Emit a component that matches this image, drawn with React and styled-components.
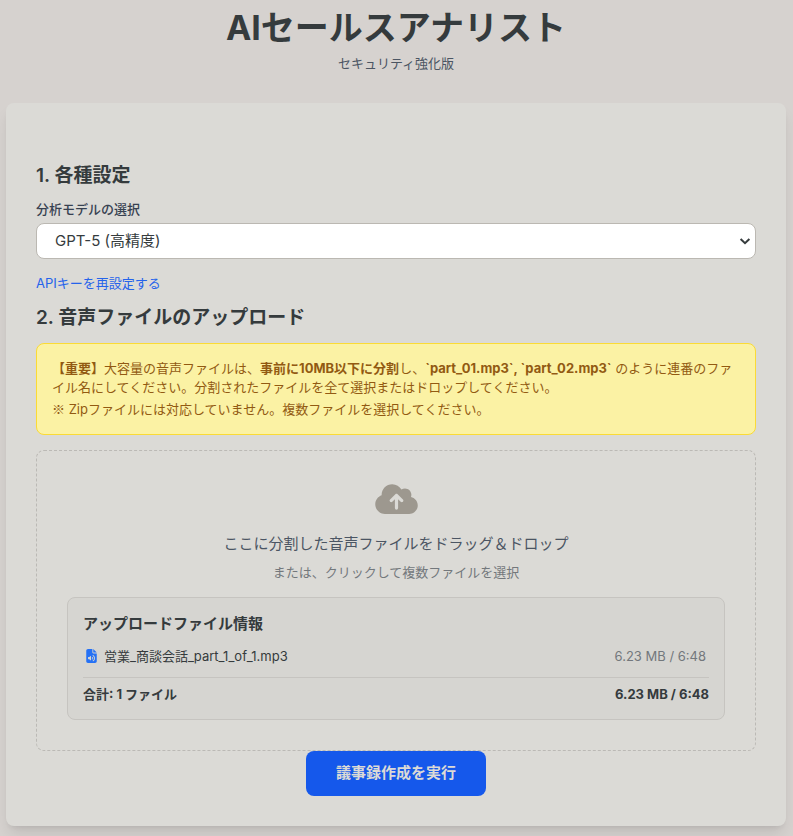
import React, {useState} from "react";
import styled, {createGlobalStyle} from "styled-components";
import {FaCloudArrowUp, FaFileAudio} from "react-icons/fa6";

const GlobalStyle = createGlobalStyle`
	* {
		box-sizing: border-box;
	}

	body {
		margin: 0;
		background: #d6d2cf;
		color: #353b3d;
		font-family: Inter, "Noto Sans CJK JP", sans-serif;
		font-size: 15px;
		line-height: 23px;
	}

	h1, h2, h3, p, ul {
		margin: 0;
		padding: 0;
	}
`

const Page = styled.div`
	max-width: 960px;
	margin: 0 auto;
	padding: 9px 7px 10px 6px;
`

const Header = styled.header`
	margin-bottom: 30px;
	text-align: center;
`

const Title = styled.h1`
	font-size: 34px;
	font-weight: 700;
	line-height: 38px;
`

const Subtitle = styled.p`
	margin-top: 6px;
	color: #4b5563;
	font-size: 13px;
	line-height: 20px;
`

const Card = styled.main`
	padding: 60px 30px 30px;
	border-radius: 8px;
	background: #dbdad6;
	box-shadow: 0 10px 15px -3px rgba(0, 0, 0, 0.1), 0 4px 6px -4px rgba(0, 0, 0, 0.1);
`

const SectionTitle = styled.h2`
	margin-bottom: ${props => props.$gap};
	font-size: 19px;
	font-weight: 600;
	line-height: 26px;
`

const FieldLabel = styled.label`
	display: block;
	margin-bottom: 4px;
	color: #374151;
	font-size: 13px;
	font-weight: 500;
	line-height: 20px;
`

const SelectWrapper = styled.div`
	position: relative;
`

const ModelSelect = styled.select`
	display: block;
	width: 100%;
	height: 36px;
	padding: 0 30px 2px 18px;
	border: 1px solid #bbb8b2;
	border-radius: 8px;
	background: #fff;
	color: #353b3d;
	font-family: inherit;
	font-size: 15px;
	appearance: none;
`

const SelectArrow = styled.svg`
	position: absolute;
	top: 14px;
	right: 5px;
	width: 12px;
	height: 8px;
	pointer-events: none;
`

const ResetLink = styled.a`
	display: block;
	width: fit-content;
	margin: 14px 0 12px;
	color: #2563eb;
	font-size: 13px;
	line-height: 20px;
	text-decoration: none;
`

const Notice = styled.div`
	margin-bottom: 15px;
	padding: 15px;
	border: 1px solid #fbdb35;
	border-radius: 8px;
	background: #fbf2a4;
	color: #925a12;
	font-size: 13px;
	line-height: 19px;

	p + p {
		margin-top: 3px;
	}
`

// Inter has a narrow ※ of its own
const NoteMark = styled.span`
	font-family: "Noto Sans CJK JP", sans-serif;
	line-height: 1;
`

const DropZone = styled.section`
	padding: 30px;
	border: 1px dashed #bbb9b5;
	border-radius: 8px;
`

const DropLabel = styled.label`
	display: flex;
	flex-direction: column;
	align-items: center;
	text-align: center;
	cursor: pointer;

	svg {
		width: 43px;
		height: 34px;
		margin: 1px 0 16px;
		color: #9d988f;
	}
`

const HiddenInput = styled.input`
	position: absolute;
	width: 1px;
	height: 1px;
	opacity: 0;
`

const DropText = styled.span`
	color: #4b5563;
`

const DropHint = styled.span`
	margin-top: 7px;
	color: #73787c;
	font-size: 13px;
	line-height: 20px;
`

const FileInfo = styled.div`
	margin-top: 15px;
	padding: 15px;
	border: 1px solid #c6c4c0;
	border-radius: 8px;
	background: #d6d5d1;
`

const FileInfoTitle = styled.h3`
	margin-bottom: 8px;
	font-size: 15px;
	font-weight: 600;
	line-height: 22px;
`

const FileRow = styled.li`
	display: flex;
	justify-content: space-between;
	padding: 3px;
	font-size: 13px;
	line-height: 20px;
`

const FileName = styled.span`
	display: flex;
	align-items: center;
	gap: 7px;

	svg {
		width: 11px;
		height: 14px;
		color: #2571f5;
	}
`

const FileSize = styled.span`
	color: #73787c;
`

const TotalRow = styled.div`
	display: flex;
	justify-content: space-between;
	margin-top: 8px;
	padding-top: 6px;
	border-top: 1px solid #c6c4c0;
	font-size: 13px;
	font-weight: 700;
	line-height: 20px;
`

const RunButton = styled.button`
	display: block;
	margin: 0 auto;
	padding: 10px 30px 12px;
	border: 0;
	border-radius: 8px;
	background: #1558eb;
	color: #dbdad6;
	font-family: inherit;
	font-size: 15px;
	font-weight: 700;
	line-height: 23px;
	cursor: pointer;
`

const files = [
  {name: '営業_商談会話_part_1_of_1.mp3', info: '6.23 MB / 6:48'}
]

const FileList = () => {
  return (
	<FileInfo>
		<FileInfoTitle>アップロードファイル情報</FileInfoTitle>
		<ul>
			{files.map(file =>
				<FileRow key={file.name}>
					<FileName><FaFileAudio />{file.name}</FileName>
					<FileSize>{file.info}</FileSize>
				</FileRow>
			)}
		</ul>
		<TotalRow>
			<span>合計: {files.length} ファイル</span>
			<span>6.23 MB / 6:48</span>
		</TotalRow>
	</FileInfo>
  )
}

const App = () => {

  const [model, setModel] = useState('gpt-5');

  return (
	<Page lang="ja">
		<GlobalStyle />
		<Header>
			<Title>AIセールスアナリスト</Title>
			<Subtitle>セキュリティ強化版</Subtitle>
		</Header>
		<Card>
			<SectionTitle $gap="10px">1. 各種設定</SectionTitle>
			<FieldLabel htmlFor="model">分析モデルの選択</FieldLabel>
			<SelectWrapper>
				<ModelSelect id="model" value={model} onChange={e => setModel(e.target.value)}>
					<option value="gpt-5">GPT-5 (高精度)</option>
				</ModelSelect>
				<SelectArrow viewBox="0 0 12 8" aria-hidden="true">
					<path d="M1.6 2 L6 6.2 L10.4 2" fill="none" stroke="#353b3d" strokeWidth="2" />
				</SelectArrow>
			</SelectWrapper>
			<ResetLink href="#api-key">APIキーを再設定する</ResetLink>
			<SectionTitle $gap="12px">2. 音声ファイルのアップロード</SectionTitle>
			<Notice>
				<p>
					<strong>【重要】</strong>大容量の音声ファイルは、<strong>事前に10MB以下に分割</strong>し、<strong>`part_01.mp3`, `part_02.mp3`</strong> のように連番のファイル名にしてください。分割されたファイルを全て選択またはドロップしてください。
				</p>
				<p><NoteMark>※</NoteMark> Zipファイルには対応していません。複数ファイルを選択してください。</p>
			</Notice>
			<DropZone>
				<DropLabel htmlFor="audio">
					<FaCloudArrowUp />
					<DropText>ここに分割した音声ファイルをドラッグ＆ドロップ</DropText>
					<DropHint>または、クリックして複数ファイルを選択</DropHint>
				</DropLabel>
				<HiddenInput id="audio" type="file" accept="audio/*" multiple />
				<FileList />
			</DropZone>
			<RunButton type="button">議事録作成を実行</RunButton>
		</Card>
	</Page>
  )
}

export default App;
